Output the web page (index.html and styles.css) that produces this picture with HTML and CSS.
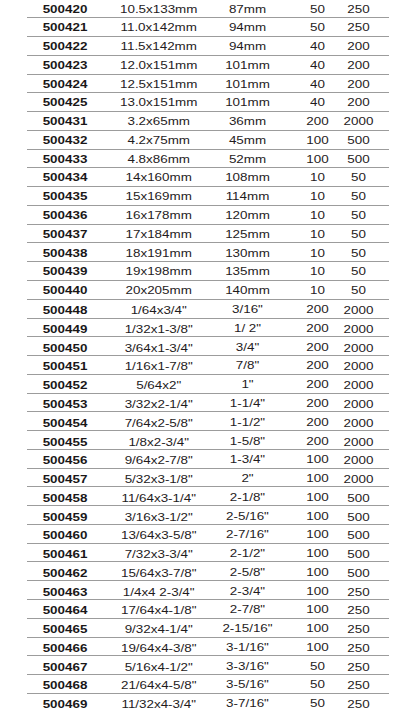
FILE: index.html
```html
<!DOCTYPE html>
<html>
<head>
<meta charset="utf-8">
<link rel="stylesheet" href="styles.css">
</head>
<body>
<div class="table">
  <div class="row"><b>500420</b><span>10.5x133mm</span><span>87mm</span><span class="c4">50</span><span>250</span></div>
  <div class="row"><b>500421</b><span>11.0x142mm</span><span>94mm</span><span class="c4">50</span><span>250</span></div>
  <div class="row"><b>500422</b><span>11.5x142mm</span><span>94mm</span><span class="c4">40</span><span>200</span></div>
  <div class="row"><b>500423</b><span>12.0x151mm</span><span>101mm</span><span class="c4">40</span><span>200</span></div>
  <div class="row"><b>500424</b><span>12.5x151mm</span><span>101mm</span><span class="c4">40</span><span>200</span></div>
  <div class="row"><b>500425</b><span>13.0x151mm</span><span>101mm</span><span class="c4">40</span><span>200</span></div>
  <div class="row"><b>500431</b><span>3.2x65mm</span><span>36mm</span><span class="c4">200</span><span>2000</span></div>
  <div class="row"><b>500432</b><span>4.2x75mm</span><span>45mm</span><span class="c4">100</span><span>500</span></div>
  <div class="row"><b>500433</b><span>4.8x86mm</span><span>52mm</span><span class="c4">100</span><span>500</span></div>
  <div class="row"><b>500434</b><span>14x160mm</span><span>108mm</span><span class="c4">10</span><span>50</span></div>
  <div class="row"><b>500435</b><span>15x169mm</span><span>114mm</span><span class="c4">10</span><span>50</span></div>
  <div class="row"><b>500436</b><span>16x178mm</span><span>120mm</span><span class="c4">10</span><span>50</span></div>
  <div class="row"><b>500437</b><span>17x184mm</span><span>125mm</span><span class="c4">10</span><span>50</span></div>
  <div class="row"><b>500438</b><span>18x191mm</span><span>130mm</span><span class="c4">10</span><span>50</span></div>
  <div class="row"><b>500439</b><span>19x198mm</span><span>135mm</span><span class="c4">10</span><span>50</span></div>
  <div class="row"><b>500440</b><span>20x205mm</span><span>140mm</span><span class="c4">10</span><span>50</span></div>
  <div class="row in"><b>500448</b><span>1/64x3/4"</span><span class="up">3/16"</span><span class="c4 up">200</span><span>2000</span></div>
  <div class="row in"><b>500449</b><span>1/32x1-3/8"</span><span class="up">1/ 2"</span><span class="c4 up">200</span><span>2000</span></div>
  <div class="row in"><b>500450</b><span>3/64x1-3/4"</span><span class="up">3/4"</span><span class="c4 up">200</span><span>2000</span></div>
  <div class="row in"><b>500451</b><span>1/16x1-7/8"</span><span class="up">7/8"</span><span class="c4 up">200</span><span>2000</span></div>
  <div class="row in"><b>500452</b><span>5/64x2"</span><span class="up">1"</span><span class="c4 up">200</span><span>2000</span></div>
  <div class="row in"><b>500453</b><span>3/32x2-1/4"</span><span class="up">1-1/4"</span><span class="c4 up">200</span><span>2000</span></div>
  <div class="row in"><b>500454</b><span>7/64x2-5/8"</span><span class="up">1-1/2"</span><span class="c4 up">200</span><span>2000</span></div>
  <div class="row in"><b>500455</b><span>1/8x2-3/4"</span><span class="up">1-5/8"</span><span class="c4 up">200</span><span>2000</span></div>
  <div class="row in"><b>500456</b><span>9/64x2-7/8"</span><span class="up">1-3/4"</span><span class="c4 up">100</span><span>2000</span></div>
  <div class="row in"><b>500457</b><span>5/32x3-1/8"</span><span class="up">2"</span><span class="c4 up">100</span><span>2000</span></div>
  <div class="row in"><b>500458</b><span>11/64x3-1/4"</span><span class="up">2-1/8"</span><span class="c4 up">100</span><span>500</span></div>
  <div class="row in"><b>500459</b><span>3/16x3-1/2"</span><span class="up">2-5/16"</span><span class="c4 up">100</span><span>500</span></div>
  <div class="row in"><b>500460</b><span>13/64x3-5/8"</span><span class="up">2-7/16"</span><span class="c4 up">100</span><span>500</span></div>
  <div class="row in"><b>500461</b><span>7/32x3-3/4"</span><span class="up">2-1/2"</span><span class="c4 up">100</span><span>500</span></div>
  <div class="row in"><b>500462</b><span>15/64x3-7/8"</span><span class="up">2-5/8"</span><span class="c4 up">100</span><span>500</span></div>
  <div class="row in"><b>500463</b><span>1/4x4 2-3/4"</span><span class="up">2-3/4"</span><span class="c4 up">100</span><span>250</span></div>
  <div class="row in"><b>500464</b><span>17/64x4-1/8"</span><span class="up">2-7/8"</span><span class="c4 up">100</span><span>250</span></div>
  <div class="row in"><b>500465</b><span>9/32x4-1/4"</span><span class="up">2-15/16"</span><span class="c4 up">100</span><span>250</span></div>
  <div class="row in"><b>500466</b><span>19/64x4-3/8"</span><span class="up">3-1/16"</span><span class="c4 up">100</span><span>250</span></div>
  <div class="row in"><b>500467</b><span>5/16x4-1/2"</span><span class="up">3-3/16"</span><span class="c4 up">50</span><span>250</span></div>
  <div class="row in"><b>500468</b><span>21/64x4-5/8"</span><span class="up">3-5/16"</span><span class="c4 up">50</span><span>250</span></div>
  <div class="row in last"><b>500469</b><span>11/32x4-3/4"</span><span class="up">3-7/16"</span><span class="c4 up">50</span><span>250</span></div>
</div>
</body>
</html>
```

FILE: styles.css
```css
html, body {
  margin: 0;
  padding: 0;
  background: #ffffff;
  overflow: hidden;
}

.table {
  margin: -0.5px 0 0 27px;
  width: 362px;
  font-family: "Liberation Sans", Arial, sans-serif;
  font-size: 13.4px;
  color: #1f1c1d;
}

.row {
  display: grid;
  grid-template-columns: 76px 111.4px 66.2px 16.4px 41px 41px 1fr;
  align-items: center;
  box-sizing: border-box;
  height: 18.77px;
  padding-top: 1.4px;
  border-bottom: 1px solid #9c9c9c;
  line-height: 15px;
}

.row.last {
  border-bottom: none;
}

.row > b,
.row > span {
  display: block;
  text-align: center;
  white-space: nowrap;
  transform: scaleY(0.87);
}

.row > b {
  font-weight: bold;
  color: #1a1718;
}

.row > .c4 {
  grid-column: 5;
}

.row > .up {
  padding-bottom: 4px;
}
```
